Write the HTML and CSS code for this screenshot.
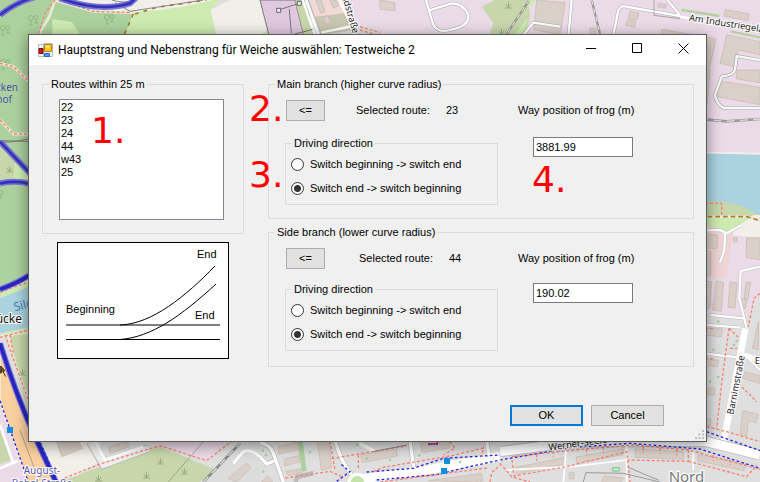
FILE: index.html
```html
<!DOCTYPE html>
<html lang="de">
<head>
<meta charset="utf-8">
<meta name="viewport" content="width=device-width, initial-scale=1">
<title>Hauptstrang und Nebenstrang für Weiche auswählen</title>
<link rel="stylesheet" href="styles.css">
</head>
<body>
<svg class="map" viewBox="0 0 760 482" preserveAspectRatio="xMinYMin slice" role="img" aria-label="Map">
  <defs>
    <g id="tree" fill="none" stroke="#8db883" stroke-width="1"><circle cx="3" cy="3" r="2.5"/><path d="M3 5v5M1 10h4"/><circle cx="8" cy="2.500" r="2"/><path d="M8 4v4M6 8h4"/></g>
    <path id="shrub" d="M0 6h7M3.500 6V0M3.500 6L1 2M3.500 6L6 2" fill="none" stroke="#9eae83"/>
  </defs>
  <rect class="residential" width="760" height="482"/>

  <!-- north strip -->
  <g transform="scale(.33333)">
    <path class="forest" d="M0 0H165L135 60 400 40 372 110H90V720H0z"/>
    <path class="forest" d="M165 0L135 40 110 110H380L400 38 280 34z"/>
    <path class="grass" d="M157 58L215 65 245 110H157zM400 38L560 15 640 0H660L632 28 650 110H372z"/>
    <path class="land" d="M200 0H640L560 18 480 30 390 36 270 30z"/>
    <path class="land" d="M690 0H785L810 110H650L632 30z"/>
    <path class="grass" d="M770 110L805 90 820 110z"/>
    <path d="M780 0H885L912 110H808z" fill="#e0c8de" stroke="#777" stroke-width="3"/>
    <path d="M885 0H920L940 110H912z" fill="#c8d7ab" stroke="#999" stroke-width="2"/>
    <path class="residential" d="M920 0H1060V110H945z"/>
    <path d="M932 0H1030L1045 40 938 55z" fill="#f0d9d7"/>
    <path d="M945 50L1045 38 1062 90 965 105z" fill="#c8c5b0"/>
    <path class="industrial" d="M1045 0H1140V80H1060z"/>
    <g class="building"><path d="M948 0L962 40 975 36 964 0zM990 0L1000 24 1016 18 1008 0zM970 52l14-4 8 20-14 6z"/></g>
    <path d="M918 0L958 110M908 0L946 110M1018 0L1070 110M962 98L1060 78" fill="none" stroke="#fff" stroke-width="7"/>
    <path d="M925 0L966 110" fill="none" stroke="#999" stroke-width="2"/>
    <path d="M836 30L897 10M874 105L938 88M874 100L868 28" fill="none" stroke="#777" stroke-width="3"/>
    <path d="M830 25h12v12h-12zM892 4h12v12h-12z" fill="#eee" stroke="#666" stroke-width="3"/>
    <path d="M165 0L148 50 115 105M165 0L280 34 395 38 405 42" class="halo"/>
    <path d="M165 0L135 40 115 105M175 0L280 34 395 38" class="path"/>
    <path d="M400 42L372 105M405 42L470 22 620 0" fill="none" stroke="#a3782a" stroke-width="5" stroke-dasharray="11 16"/>
    <path d="M335 0Q370 12 410 0M345 8L390 34 610 0" fill="none" stroke="#888" stroke-width="3"/>
    <path d="M0 45Q50 5 110 -10" class="rail-wide"/><path d="M0 45Q50 5 110 -10" class="rail"/>
    <path d="M180 -5Q300 38 390 10L410 -8" class="rail-wide"/><path d="M180 -5Q300 38 390 10L410 -8" class="rail"/>
    <path d="M1080 80L1140 98M1080 90L1140 108" class="path"/>
    <text x="1026" y="-12" transform="rotate(74 1026 -12)" class="street">ndstraße</text>
  </g>
  <use href="#tree" x="28" y="15"/><use href="#tree" x="104" y="14"/><use href="#tree" x="0" y="25"/><use href="#tree" x="0" y="59"/>

  <!-- northeast -->
  <g transform="translate(380 0) scale(.33333)">
    <path class="industrial" d="M0 0H1140V750H900V110H0z"/>
    <path d="M345 0H445L450 50 435 110H325L340 70 305 20z" fill="#c8d7ab"/>
    <path class="grass" d="M445 0H468L445 25zM445 50L425 110H400z"/>
    <g class="building"><path d="M470 0L556 8 540 105 462 88zM0 0L45 8V32L0 28zM750 34l27 5-6 22-27-5zM742 60l26 6-5 16-26-6zM630 84h18v18h-18zM835 10l24 4-2 11-24-4zM1036 28l72 14-4 20-72-14zM845 88L1008 116 985 220H960L970 140 845 110z"/><path d="M1040 104L1140 125V165L1075 150 1062 200 1020 190z"/></g>
    <path d="M448 0L375 110M635 0L662 110" fill="none" stroke="#999" stroke-width="7"/>
    <path d="M448 0L375 110M635 0L662 110" fill="none" stroke="#eee" stroke-width="3" stroke-dasharray="14 12"/>
    <path d="M575 0L565 110M430 105L460 68 540 80M135 -10L160 75Q175 100 210 90Q270 78 265 45Q250 10 215 10L145 32M700 105L715 30 728 18 900 48M862 0L900 45" fill="none" stroke="#aaa" stroke-width="10"/>
    <path d="M575 0L565 110M430 105L460 68 540 80M135 -10L160 75Q175 100 210 90Q270 78 265 45Q250 10 215 10L145 32M700 105L715 30 728 18 900 48M862 0L900 45M900 50L1140 95" fill="none" stroke="#fff" stroke-width="7"/>
    <path d="M822 0V46L900 56" fill="none" stroke="#888" stroke-width="2"/>
    <path d="M905 30L1018 48M1052 94L1140 112" fill="none" stroke="#b5d0a0" stroke-width="7"/>
    <text x="926" y="62" transform="rotate(9 926 62)" class="street">Am Industriegelände</text>
  </g>
  <use href="#shrub" x="505" y="2"/><use href="#shrub" x="498" y="29"/>

  <!-- east side -->
  <g transform="translate(500 70) scale(.33333)">
    <path class="industrial" d="M600 30H780V250H600z"/>
    <path class="building" d="M712 0H780V38L708 26zM656 32L780 52V104L650 80zM618 0h12l-8 100h-4z"/>
    <path d="M780 -30L710 -42 705 0Q700 15 665 20L645 75Q648 100 670 114H780" fill="none" stroke="#aaa" stroke-width="11"/>
    <path d="M780 -30L710 -42 705 0Q700 15 665 20L645 75Q648 100 670 114H780" fill="none" stroke="#f6f6f6" stroke-width="7"/>
    <path d="M600 147L680 154 780 147" fill="none" stroke="#999" stroke-width="8"/>
    <path d="M600 147L680 154 780 147" fill="none" stroke="#ddd" stroke-width="4" stroke-dasharray="24 16"/>
    <path class="water" d="M600 250H780V440H600z"/>
    <path class="land" d="M600 245L780 248V254L600 250z"/>
    <path d="M600 398Q700 382 775 435L600 445z" fill="#c8d7ab"/>
    <path class="grass" d="M600 440H780V490H600z"/>
    <path class="land" d="M700 480L760 435H780V580H690z"/>
    <path d="M600 400H665V435" class="path"/>
    <path d="M600 440H740L780 450" class="halo"/><path d="M600 440H740L780 452" fill="none" stroke="#b08020" stroke-width="5" stroke-dasharray="14 9"/>
  </g>
  <g transform="translate(500 225) scale(.33333)">
    <path d="M600 5H655L690 35 700 15 680 158H600z" fill="#f0d4d5"/>
    <path class="grass" d="M640 0H720L690 20z"/>
    <path class="industrial" d="M698 30L780 40V190L745 275 600 262V160H680z"/>
    <g class="building"><path d="M600 28L652 30V70H600zM600 80h32v72h-32zM740 38H780V104L738 98zM700 38h12v12h-12zM600 165L635 170 630 250H600zM648 168L671 172 664 259 638 255zM690 170L711 174 705 250 684 247zM738 172h14l-8 50h-12zM726 222h15l-4 28h-15zM600 306L668 312 664 335 600 330zM600 400L656 406 652 425 600 420zM775 290V375L757 370zM735 440L780 452V475L728 460z"/></g>
    <path d="M600 16L660 15 680 25 725 0M675 20L673 75 660 112M780 125L722 138 718 220 740 310M632 270L730 280M600 298L720 308M600 384L720 398M745 400L780 435" fill="none" stroke="#bbb" stroke-width="10"/>
    <path d="M600 16L660 15 680 25 725 0M675 20L673 75 660 112M780 125L722 138 718 220 740 310M632 270L730 280M600 298L720 308M600 384L720 398M745 400L780 435" fill="none" stroke="#fff" stroke-width="7"/>
    <path d="M736 310L718 405 670 655" fill="none" stroke="#fff" stroke-width="20"/><path d="M725 388L780 405" fill="none" stroke="#fff" stroke-width="15"/>
    <path d="M780 205L762 220 745 305M687 310L665 475 650 610M687 310L718 340M690 370H712M600 310H640M600 398L640 402M715 475L770 530" class="path"/>
    <g class="dots"><circle cx="655" cy="290" r="4"/><circle cx="710" cy="348" r="4"/><circle cx="702" cy="360" r="4"/><circle cx="640" cy="375" r="4"/><circle cx="655" cy="456" r="4"/><circle cx="630" cy="470" r="4"/></g>
    <text x="700" y="570" transform="rotate(-79 700 570)" class="street">Barnimstraße</text>
    <text x="764" y="416" class="street">E</text>
  </g>

  <!-- southeast -->
  <g transform="translate(500 380) scale(.33333)">
    <path d="M0 215L240 185H620L780 225" fill="none" stroke="#bbb" stroke-width="33"/>
    <path d="M0 215L240 185H620L780 225" fill="none" stroke="#fff" stroke-width="28"/>
    <g class="building"><path d="M46 262L192 233V253L50 282zM228 231L370 207V224L230 250zM406 207L550 215V238L406 232zM596 223L736 252 732 272 592 242zM312 288L370 294 360 310H304zM728 92L775 103 768 128 745 122 740 168 720 164zM620 24h24v20h-24zM620 116h12v20h-12zM208 278h14v18h-14z"/></g>
    <path d="M200 190L190 306M380 190V306M580 210V270M20 270L215 260 380 240" fill="none" stroke="#fff" stroke-width="5"/>
    <path d="M0 240L220 202 390 190 600 207 780 265M620 155L780 212" class="blueway"/>
    <path d="M0 250L35 290 90 306M36 240L42 288 200 260 380 215 390 306M35 230L220 210 400 195 565 210 780 268M565 210V244L385 240M565 244L740 290 770 255M620 140L680 155 780 185M110 222v20M160 214v18M260 206v18M310 200v18M430 200v18M480 204v18M530 208v18M640 225v18M690 238v18" class="path"/>
    <path d="M250 306L258 278 370 280 480 306M385 262L450 290 475 300" fill="none" stroke="#999" stroke-width="3"/>
    <path d="M338 263h20v10h-20z" fill="#c8f0d0" stroke="#7cbf8a" stroke-width="3"/>
    <text x="147" y="212" transform="rotate(-8 147 212)" class="street">Werner-Seele</text>
    <text x="506" y="306" class="district">Nord</text>
  </g>

  <!-- south -->
  <g transform="translate(240 380) scale(.33333)">
    <path class="forest" d="M172 182H188L200 272 186 275z"/>
    <g class="building"><path d="M116 200L174 186 178 208 116 222zM132 238L176 227 181 245 134 258zM138 274L182 266 184 278 144 286zM232 184H268L274 264 244 270zM362 224L470 208 472 228 366 248zM540 184H628V204L546 218zM0 260L14 250 30 264 4 294zM64 306L84 288 98 306zM566 302L724 280 728 302 700 306z"/></g>
    <path d="M0 235L25 208 45 215 80 252 102 243M45 184Q90 190 100 220L130 306M285 180Q300 240 335 285M510 180L522 270M740 184L748 235M166 306L172 290 220 280" fill="none" stroke="#bbb" stroke-width="14"/>
    <path d="M0 235L25 208 45 215 80 252 102 243M45 184Q90 190 100 220L130 306M285 180Q300 240 335 285M510 180L522 270M740 184L748 235M358 190L402 212" fill="none" stroke="#fff" stroke-width="10"/>
    <path d="M340 300L560 270 780 230" fill="none" stroke="#fff" stroke-width="28"/>
    <circle cx="352" cy="308" r="30" fill="#fff"/><circle cx="352" cy="308" r="20" fill="#c5e2a9"/>
    <path d="M290 304L330 275 300 250M380 276L520 265 610 235 780 225M410 300L590 284 680 262 780 240" class="blueway"/>
    <path d="M136 294L270 274 310 292M270 184L285 270M275 236L355 222 500 198M355 225V270M400 275L430 262 640 226 730 204 725 230M630 184L645 205 610 225M750 306L755 278 780 255M420 306L740 264" class="path"/>
    <path d="M400 215L500 195" fill="none" stroke="#888" stroke-width="3"/>
    <path d="M564 192h30M568 192v4M592 184v10" fill="none" stroke="#a020a0" stroke-width="4"/>
    <g class="dots"><circle cx="68" cy="212" r="4"/><circle cx="78" cy="226" r="4"/><circle cx="70" cy="275" r="4"/><circle cx="210" cy="216" r="4"/><circle cx="352" cy="194" r="4"/><circle cx="380" cy="236" r="4"/><circle cx="450" cy="240" r="4"/><circle cx="538" cy="226" r="4"/><circle cx="660" cy="246" r="4"/></g>
    <path d="M612 234h18v18h-18zM603 264h18v18h-18z" fill="#0f8fe0"/>
  </g>

  <!-- west side -->
  <g transform="translate(0 60) scale(.33333)">
    <path d="M0 240L90 330V362L0 360z" fill="#c8d7ab"/>
    <path class="grass" d="M45 300L88 345V360H40z"/>
    <path d="M0 10L40 20 88 65M0 180L40 222H88" class="halo"/><path d="M0 10L40 20 88 65M0 180L40 222H88" class="path"/>
    <path d="M0 245Q40 250 88 235M0 242L88 244" fill="none" stroke="#777" stroke-width="3"/>
    <path d="M0 245L90 340M0 370Q50 360 90 372" class="rail-wide"/><path d="M0 245L90 340M0 370Q50 360 90 372" class="rail"/>
  </g>
  <text x="18" y="91" text-anchor="end" class="place">cken</text>
  <text x="12" y="103" text-anchor="end" class="place">hof</text>
  <use href="#shrub" x="6" y="166"/><use href="#tree" x="20" y="239"/><use href="#tree" x="-7" y="190"/>

  <!-- southwest -->
  <g transform="translate(0 230) scale(.33333)">
    <path class="forest" d="M0 0H88V140L0 185z"/>
    <path class="grass" d="M0 185L88 145V335L0 310z"/>
    <path class="water" d="M0 205L88 170V290L0 310z"/>
    <path d="M20 315H88V560z" fill="#c8d7ab"/>
    <path class="industrial" d="M0 480L40 690 0 720zM0 500L70 690 110 756H0z"/>
    <path d="M0 590L35 690 0 702z" fill="#c8d7ab"/>
    <path d="M0 350L90 600 170 756H82L0 515z" fill="#fbd0a0" stroke="#fff" stroke-width="3"/>
    <path class="land" d="M100 600H310L290 700 200 756H160z"/>
    <path d="M180 756L300 710 480 650 650 720 600 756z" fill="#c8d7ab"/>
    <path class="industrial" d="M445 660L490 620H700L620 695 480 645z"/>
    <path d="M640 725L720 635H780V756H610z" fill="#dcdcdc"/>
    <path class="building" d="M170 635H235L248 655 185 680zM325 650L380 635 388 650 330 670zM685 745L740 698 752 714 710 756z"/>
    <path d="M270 635L310 705 445 655" fill="none" stroke="#bbb" stroke-width="24"/>
    <path d="M270 635L310 705 445 655" fill="none" stroke="#eee" stroke-width="18"/>
    <path d="M285 635L315 690 430 650M0 585L38 695M0 715L55 692M700 700L730 665Q750 655 780 680" fill="none" stroke="#fff" stroke-width="8"/>
    <path d="M505 756L610 635M60 600L105 720" fill="none" stroke="#888" stroke-width="2"/>
    <path d="M610 756L720 640" fill="none" stroke="#888" stroke-width="8"/><path d="M610 756L720 640" fill="none" stroke="#ddd" stroke-width="4" stroke-dasharray="22 14"/>
    <path d="M0 185L88 153M0 320L88 303M25 315L45 400 88 520" class="halo"/>
    <path d="M0 187L88 155M0 322L88 300M15 315L45 400 88 520M30 315L40 370M180 750L300 702 480 647 620 692 700 630" class="path"/>
    <path d="M0 178Q50 160 88 136" class="rail-wide"/><path d="M0 178Q50 160 88 136" class="rail dark"/>
    <path d="M0 340Q50 500 105 620T175 770" class="rail-wide"/><path d="M0 340Q50 500 105 620T175 770" class="rail dark"/>
    <path d="M0 512L85 756M115 625L170 750" class="blueway"/>
    <path d="M21 591h18v18h-18z" fill="#0f8fe0"/>
    <path d="M2 408L15 422 9 424 17 440M2 408V430L8 424" fill="#4a3510" stroke="#4a3510" stroke-width="3"/>
    <text x="44" y="244" transform="rotate(-14 44 244)" class="waterway">Silo</text>
  </g>
  <text x="22" y="323" text-anchor="end" class="bridge">ücke</text>
  <text x="42" y="474" text-anchor="middle" class="road">August-</text>
  <text x="42" y="487" text-anchor="middle" class="road">Bebel-Straße</text>
  <use href="#shrub" x="157" y="458"/><use href="#shrub" x="143" y="472"/><use href="#shrub" x="181" y="468"/><use href="#shrub" x="95" y="475"/><use href="#shrub" x="19" y="369"/>
</svg>

<main class="dialog" role="dialog" aria-labelledby="dialog-title">
  <header class="titlebar">
    <svg class="app-icon" width="15" height="15" viewBox="0 0 15 15" aria-hidden="true">
      <path d="M.5 1.500h5v12h-5zM5.500.5h9v13h-9z" fill="#f4f7fc" stroke="#b4bccb"/>
      <path d="M6.500 1.500h7v7h-7z" fill="#fbc623" stroke="#b98400"/><path d="M7.500 2.500h4v2h-4z" fill="#ffe690"/>
      <path d="M1 5.500h4v5H1z" fill="#c41d14" stroke="#7f0c0c"/>
      <path d="M6.500 10.500h5v3h-5z" fill="#5c9af0" stroke="#2b62c6"/>
    </svg>
    <h1 id="dialog-title" class="title">Hauptstrang und Nebenstrang für Weiche auswählen: Testweiche 2</h1>
    <button class="window-button" type="button" aria-label="Minimize"><svg width="11" height="11" viewBox="0 0 11 11"><path d="M0 5.500h10"/></svg></button>
    <button class="window-button" type="button" aria-label="Maximize"><svg width="11" height="11" viewBox="0 0 11 11"><path d="M.5.5h9v9h-9z"/></svg></button>
    <button class="window-button" type="button" aria-label="Close"><svg width="11" height="11" viewBox="0 0 11 11"><path d="M.5.5l10 10M10.500.5l-10 10"/></svg></button>
  </header>

  <form class="content">
    <div class="left">
      <fieldset class="group routes">
        <legend id="routes-label">Routes within 25 m</legend>
        <select class="route-list" size="9" aria-labelledby="routes-label">
          <option>22</option><option>23</option><option>24</option><option>44</option><option>w43</option><option>25</option>
        </select>
      </fieldset>
      <svg class="diagram" viewBox="0 0 170 115" role="img" aria-label="Switch diagram">
        <path class="soft" d="M8 82H162"/>
        <path d="M8 96.500H162"/>
        <path d="M62 82C94 81 128 53 157 23M62 96.500C94 94 123 73 158 41"/>
        <text x="8" y="70">Beginning</text>
        <text x="139" y="15">End</text>
        <text x="137" y="76">End</text>
      </svg>
    </div>

    <div class="right">
      <fieldset class="group branch">
        <legend>Main branch (higher curve radius)</legend>
        <div class="assign">
          <button class="button assign-button" type="button">&lt;=</button>
          <span class="selected-label">Selected route:</span><output>23</output>
        </div>
        <label class="frog-label" for="frog-main">Way position of frog (m)</label>
        <fieldset class="group direction">
          <legend>Driving direction</legend>
          <label class="choice"><input type="radio" name="main-direction">Switch beginning -&gt; switch end</label>
          <label class="choice"><input type="radio" name="main-direction" checked>Switch end -&gt; switch beginning</label>
        </fieldset>
        <input class="frog" id="frog-main" type="text" value="3881.99">
      </fieldset>
      <fieldset class="group branch branch-side">
        <legend>Side branch (lower curve radius)</legend>
        <div class="assign">
          <button class="button assign-button" type="button">&lt;=</button>
          <span class="selected-label">Selected route:</span><output>44</output>
        </div>
        <label class="frog-label" for="frog-side">Way position of frog (m)</label>
        <fieldset class="group direction">
          <legend>Driving direction</legend>
          <label class="choice"><input type="radio" name="side-direction">Switch beginning -&gt; switch end</label>
          <label class="choice"><input type="radio" name="side-direction" checked>Switch end -&gt; switch beginning</label>
        </fieldset>
        <input class="frog" id="frog-side" type="text" value="190.02">
      </fieldset>
    </div>

    <div class="actions">
      <button class="button default" type="submit">OK</button>
      <button class="button" type="button">Cancel</button>
    </div>
  </form>
  <svg class="grip" width="9" height="9" viewBox="0 0 9 9" aria-hidden="true"><path d="M7 0h2v2H7zM3.500 3.500h2v2h-2zM7 3.500h2v2H7zM0 7h2v2H0zM3.500 7h2v2h-2zM7 7h2v2H7z"/></svg>
  <span class="callout callout-1">1.</span>
  <span class="callout callout-2">2.</span>
  <span class="callout callout-3">3.</span>
  <span class="callout callout-4">4.</span>
</main>
</body>
</html>
```
FILE: styles.css
```css
* {
  box-sizing: border-box;
}

body {
  min-height: 100vh;
  margin: 0;
  padding: 34px 53px 40px 28px;
  display: flex;
  overflow: hidden;
  color: #000;
  font: 11px/13px "Liberation Sans", Arial, sans-serif;
}

button,
input,
select {
  margin: 0;
  color: inherit;
  font: inherit;
}

/* Map behind the dialog */
.map {
  position: absolute;
  inset: 0;
  width: 100%;
  height: 100%;
}

.residential { fill: #dfdfdf; }
.forest { fill: #add19e; }
.grass { fill: #cdebb0; }
.land { fill: #f2efe9; }
.industrial { fill: #ebdbe8; }
.water { fill: #aad3df; }
.building { fill: #d9d0c9; stroke: #c8b8ac; stroke-width: 2; }
.dots { fill: #a5cf9b; }

.path { fill: none; stroke: #fa8072; stroke-width: 4; stroke-dasharray: 9 6; }
.halo { fill: none; stroke: #e6e9d5; stroke-width: 9; }
.blueway { fill: none; stroke: #2424e8; stroke-width: 4; stroke-dasharray: 8 7; }
.rail-wide { fill: none; stroke: #7774d8; stroke-width: 18; }
.rail { fill: none; stroke: #3532b8; stroke-width: 8; }
.dark { stroke: #2825c0; stroke-width: 11; }

.map text {
  font-family: "Noto Sans", sans-serif;
  paint-order: stroke;
  stroke: #fff;
  stroke-width: 2px;
}

.map .street { font-size: 28px; fill: #222; stroke-width: 6px; }
.map .district { font-size: 45px; fill: #777; stroke-width: 7px; }
.map .waterway { font-size: 36px; fill: #4d80b3; stroke: none; }
.map .place { font-size: 10px; fill: #4d53a8; stroke: none; }
.bridge { font-size: 12px; fill: #111; }
.road { font-size: 10px; fill: #5b57b0; }

/* Dialog window */
.dialog {
  position: relative;
  flex: 1;
  display: flex;
  flex-direction: column;
  border: 1px solid #5a5a5a;
  background: #f0f0f0;
  box-shadow: 0 3px 14px rgba(0, 0, 0, 0.45);
}

.titlebar {
  height: 30px;
  padding-left: 9px;
  display: flex;
  align-items: center;
  background: #fff;
}

.title {
  flex: 1;
  margin: 0 0 0 5px;
  font: 12px/16px Roboto, "Noto Sans", sans-serif;
  white-space: nowrap;
}

.window-button {
  width: 46px;
  height: 30px;
  padding: 0;
  border: 0;
  background: none;
}

.window-button path {
  fill: none;
  stroke: #000;
}

.content {
  flex: 1;
  padding: 13px 12px 15px 13px;
  display: grid;
  grid-template: 1fr auto / 202px 1fr;
  column-gap: 24px;
}

.group {
  min-width: 0;
  margin: 0;
  padding: 0;
  border: 1px solid #dcdcdc;
}

.group > legend {
  margin-left: -10px;
  padding: 0 2px;
}

.routes {
  padding: 8px 19px 13px 16px;
}

.route-list {
  display: block;
  width: 100%;
  height: 121px;
  padding: 1px 0;
  border: 1px solid #828790;
  border-radius: 0;
  background: #fff;
  overflow: hidden;
  outline: 0;
}

.route-list option {
  min-height: 13px;
  padding: 0 1px;
  line-height: 13px;
}

.diagram {
  display: block;
  width: 172px;
  height: 117px;
  margin: 8px 0 0 15px;
  border: 1px solid #000;
  background: #fff;
}

.diagram path {
  fill: none;
  stroke: #000;
}

.right {
  display: flex;
  flex-direction: column;
  gap: 7px;
}

.branch {
  --row-gap: 16px;
  --label-gap: 31px;
  height: 141px;
  padding: 9px 16px 0;
  display: grid;
  grid-template-columns: 213px 1fr;
  align-content: start;
  align-items: start;
  gap: var(--row-gap) 20px;
}

.branch-side {
  --row-gap: 14px;
  --label-gap: 34px;
}

.assign {
  padding-left: 1px;
  display: flex;
  align-items: center;
}

.selected-label {
  width: 90px;
  margin-left: var(--label-gap);
}

.frog-label {
  align-self: center;
}

.direction {
  height: 68px;
}

.direction > legend {
  margin-left: 6px;
}

.choice {
  height: 24px;
  padding-left: 5px;
  display: flex;
  align-items: center;
  gap: 6px;
}

.direction > legend + .choice {
  margin-top: 2px;
}

.choice input {
  appearance: none;
  width: 13px;
  height: 13px;
  border: 1px solid #333;
  border-radius: 50%;
  background: #fff;
}

.choice input:checked {
  background: radial-gradient(circle, #333 3px, #fff 4px);
}

.frog {
  width: 100px;
  height: 20px;
  margin-left: 15px;
  padding: 0 2px;
  border: 1px solid #7a7a7a;
  background: #fff;
}

.button {
  width: 73px;
  height: 21px;
  padding: 0;
  border: 1px solid #adadad;
  background: #e1e1e1;
}

.assign-button {
  width: 39px;
}

.default {
  border: 2px solid #0078d7;
}

.actions {
  grid-column: 1 / -1;
  padding-right: 30px;
  display: flex;
  justify-content: flex-end;
  gap: 8px;
}

.grip {
  position: absolute;
  right: 2px;
  bottom: 2px;
  fill: #bdbdbd;
}

/* Numbered callouts laid over the window */
.callout {
  position: absolute;
  color: #f00;
  font: 36px/36px "DejaVu Sans", sans-serif;
}

.callout-1 { left: 62px; top: 78px; }
.callout-2 { left: 220px; top: 56px; }
.callout-3 { left: 220px; top: 122px; }
.callout-4 { left: 503px; top: 127px; }
```
